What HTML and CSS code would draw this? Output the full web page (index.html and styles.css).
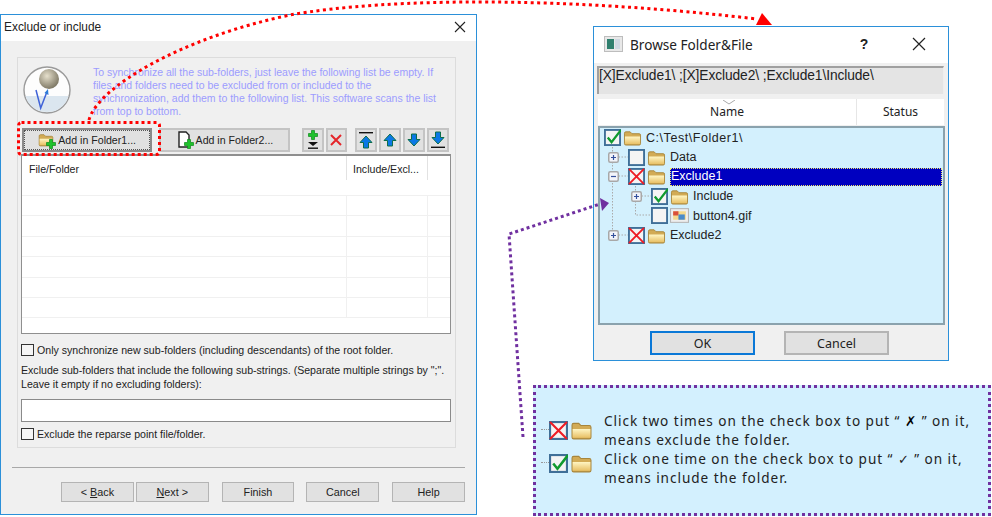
FILE: index.html
```html
<!DOCTYPE html>
<html lang="en">
<head>
<meta charset="utf-8">
<title>Exclude or include</title>
<link rel="stylesheet" href="styles.css">
</head>
<body>
<svg class="defs" width="0" height="0" aria-hidden="true">
  <defs>
    <linearGradient id="fg" x1="0" y1="0" x2="0" y2="1"><stop offset="0" stop-color="#fff6c4"/><stop offset="1" stop-color="#e8c065"/></linearGradient>
    <symbol id="folder" viewBox="0 0 20 18">
      <path d="M1.5 15.5V4.5Q1.5 3 3 3H7.5L9.5 5H17Q18.5 5 18.5 6.5V15.5Q18.5 17 17 17H3Q1.5 17 1.5 15.5Z" fill="#d2ab55" stroke="#a8863c"/>
      <path d="M2 8H18V15.5Q18 16 17 16H3Q2 16 2 15.5Z" fill="url(#fg)"/>
    </symbol>
    <symbol id="box" viewBox="0 0 18 18">
      <rect x="1" y="1" width="16" height="16" fill="#f4f4f4" stroke="#3f6f98" stroke-width="2"/>
    </symbol>
    <symbol id="box-x" viewBox="0 0 18 18">
      <rect x="1" y="1" width="16" height="16" fill="#f4f4f4" stroke="#3f6f98" stroke-width="2"/>
      <path d="M1 1L17 17M17 1L1 17" stroke="#ee1c25" stroke-width="2"/>
    </symbol>
    <symbol id="box-c" viewBox="0 0 18 18">
      <rect x="1" y="1" width="16" height="16" fill="#f4f4f4" stroke="#3f6f98" stroke-width="2"/>
      <path d="M4 9L8 14L18 1" fill="none" stroke="#0f9a2e" stroke-width="2.4"/>
    </symbol>
    <symbol id="plus" viewBox="0 0 11 11">
      <rect x=".75" y=".75" width="9.5" height="9.5" rx="1.5" fill="#f2f4fa" stroke="#a8a8a8" stroke-width="1.5"/>
      <path d="M3 5.5H8M5.5 3V8" stroke="#34509c" stroke-width="1.2"/>
    </symbol>
    <symbol id="minus" viewBox="0 0 11 11">
      <rect x=".75" y=".75" width="9.5" height="9.5" rx="1.5" fill="#f2f4fa" stroke="#a8a8a8" stroke-width="1.5"/>
      <path d="M3 5.5H8" stroke="#34509c" stroke-width="1.2"/>
    </symbol>
    <symbol id="up" viewBox="0 0 14 14">
      <path d="M7 1L13 7.5H9.5V13H4.5V7.5H1Z" fill="#0a78e6" stroke="#0d6e4a"/>
    </symbol>
    <symbol id="plus-green" viewBox="0 0 10 10">
      <path d="M3.5 .5H6.5V3.5H9.5V6.5H6.5V9.5H3.5V6.5H.5V3.5H3.5Z" fill="#1fc22c" stroke="#0c8a1a" stroke-width=".7"/>
    </symbol>
  </defs>
</svg>

<section class="window main-window">
  <header class="titlebar">
    <span class="title">Exclude or include</span>
    <svg class="close" width="12" height="12" viewBox="0 0 12 12"><path d="M1 1L11 11M11 1L1 11" stroke="#222" stroke-width="1.1"/></svg>
  </header>
  <div class="main-body">
    <div class="group">
      <div class="intro">
        <svg class="logo" width="48" height="48" viewBox="0 0 48 48">
          <defs><radialGradient id="ball" cx=".4" cy=".35" r=".7"><stop offset="0" stop-color="#e6e0cc"/><stop offset="1" stop-color="#77715e"/></radialGradient></defs>
          <circle cx="24" cy="24" r="23" fill="#fdfdfd" stroke="#9a9a9a" stroke-width="1.4"/>
          <path d="M2.5 30H45.500L43 36Q36 46 24 46Q12 46 5 36Z" fill="#dbe6ef"/>
          <circle cx="26" cy="13" r="10" fill="url(#ball)"/>
          <path d="M13 24L17.700 42L23.500 27" fill="none" stroke="#3f63d8" stroke-width="1.5"/>
          <path d="M25 23L25.500 29L21.500 27Z" fill="#2d7bd8"/>
        </svg>
        <p class="intro-text">To synchronize all the sub-folders, just leave the following list be empty. If<br>files and folders need to be excluded from or included to the<br>synchronization, add them to the following list. This software scans the list<br>from top to bottom.</p>
      </div>
      <div class="toolbar">
        <button class="btn btn-add btn-focus"><svg width="18" height="18" viewBox="0 0 18 18"><use href="#folder" width="16" height="15" x="0" y="1"/><use href="#plus-green" x="8" y="8" width="10" height="10"/></svg><span>Add in Folder1...</span></button>
        <button class="btn btn-add"><svg width="18" height="18" viewBox="0 0 18 18"><path d="M3 1H10L13 4V16H3Z" fill="#fff" stroke="#222" stroke-width="1.4"/><use href="#plus-green" x="8" y="8" width="10" height="10"/></svg><span>Add in Folder2...</span></button>
        <button class="btn btn-icon btn-first" aria-label="Add child"><svg width="16" height="20" viewBox="0 0 16 20"><use href="#plus-green" x="3" y="0" width="10" height="10"/><path d="M3 12H13L8 16Z" fill="#111"/><rect x="3" y="17.500" width="10" height="1.4" fill="#111"/></svg></button>
        <button class="btn btn-icon" aria-label="Delete"><svg width="14" height="14" viewBox="0 0 14 14"><path d="M2 2L12 12M12 2L2 12" stroke="#e5252a" stroke-width="2"/></svg></button>
        <button class="btn btn-icon btn-group-start" aria-label="Move to top"><svg width="16" height="18" viewBox="0 0 16 18"><rect x="1" y="1" width="14" height="1.4" fill="#111"/><use href="#up" x="1" y="4" width="14" height="14"/></svg></button>
        <button class="btn btn-icon" aria-label="Move up"><svg width="14" height="14" viewBox="0 0 14 14"><use href="#up"/></svg></button>
        <button class="btn btn-icon" aria-label="Move down"><svg class="flip" width="14" height="14" viewBox="0 0 14 14"><use href="#up"/></svg></button>
        <button class="btn btn-icon" aria-label="Move to bottom"><svg class="flip" width="16" height="18" viewBox="0 0 16 18"><rect x="1" y="1" width="14" height="1.4" fill="#111"/><use href="#up" x="1" y="4" width="14" height="14"/></svg></button>
      </div>
      <div class="list">
        <div class="list-row list-head"><span class="cell cell-name">File/Folder</span><span class="cell cell-state">Include/Excl...</span><span class="cell cell-end"></span></div>
        <div class="list-row"><span class="cell cell-name"></span><span class="cell cell-state"></span><span class="cell cell-end"></span></div>
        <div class="list-row"><span class="cell cell-name"></span><span class="cell cell-state"></span><span class="cell cell-end"></span></div>
        <div class="list-row"><span class="cell cell-name"></span><span class="cell cell-state"></span><span class="cell cell-end"></span></div>
        <div class="list-row"><span class="cell cell-name"></span><span class="cell cell-state"></span><span class="cell cell-end"></span></div>
        <div class="list-row"><span class="cell cell-name"></span><span class="cell cell-state"></span><span class="cell cell-end"></span></div>
        <div class="list-row"><span class="cell cell-name"></span><span class="cell cell-state"></span><span class="cell cell-end"></span></div>
      </div>
      <label class="check check-first"><span class="checkbox"></span>Only synchronize new sub-folders (including descendants) of the root folder.</label>
      <p class="desc">Exclude sub-folders that include the following sub-strings. (Separate multiple strings by ";".<br>Leave it empty if no excluding folders):</p>
      <div class="textbox"></div>
      <label class="check check-last"><span class="checkbox"></span>Exclude the reparse point file/folder.</label>
    </div>
    <div class="rule"></div>
    <div class="wizard-buttons">
      <button class="btn btn-wiz"><span>&lt; <u>B</u>ack</span></button>
      <button class="btn btn-wiz btn-next"><span><u>N</u>ext &gt;</span></button>
      <button class="btn btn-wiz btn-finish">Finish</button>
      <button class="btn btn-wiz btn-cancel">Cancel</button>
      <button class="btn btn-wiz btn-help">Help</button>
    </div>
  </div>
</section>

<section class="window browse-window">
  <header class="browse-title">
    <svg class="app-icon" width="19" height="16" viewBox="0 0 19 16"><rect x=".5" y=".5" width="18" height="15" fill="#e8e8e8" stroke="#bdbdbd"/><rect x="3" y="3" width="7" height="10" fill="#2f7f6e"/><rect x="11" y="3" width="5" height="10" fill="#cfd8e2"/></svg>
    <span class="browse-name">Browse Folder&amp;File</span>
    <span class="help-mark">?</span>
    <svg class="close-b" width="14" height="14" viewBox="0 0 14 14"><path d="M1 1L13 13M13 1L1 13" stroke="#222" stroke-width="1.2"/></svg>
  </header>
  <div class="path-box">[X]Exclude1\ ;[X]Exclude2\ ;Exclude1\Include\</div>
  <div class="tree-head">
    <span class="th-name">Name</span>
    <span class="th-status">Status</span>
    <svg class="sort" width="14" height="5" viewBox="0 0 14 5"><path d="M1 0L7 4L13 0" fill="none" stroke="#a8a8a8"/></svg>
  </div>
  <div class="tree">
    <svg class="tree-lines" width="100" height="130" viewBox="0 0 100 130"><path d="M12.500 16V108M12.500 29H28M12.500 48H28M12.500 107H28M35.500 58V87H52M35.500 68H52" fill="none" stroke="#aaa" stroke-dasharray="1.5 1.5"/></svg>
    <div class="node lvl0"><svg class="cb"><use href="#box-c"/></svg><svg class="fd"><use href="#folder"/></svg><span class="label root-label">C:\Test\Folder1\</span></div>
    <div class="node lvl1"><svg class="exp"><use href="#plus"/></svg><svg class="cb"><use href="#box"/></svg><svg class="fd"><use href="#folder"/></svg><span class="label">Data</span></div>
    <div class="node lvl1"><svg class="exp"><use href="#minus"/></svg><svg class="cb"><use href="#box-x"/></svg><svg class="fd"><use href="#folder"/></svg><span class="label selected">Exclude1</span></div>
    <div class="node lvl2"><svg class="exp"><use href="#plus"/></svg><svg class="cb"><use href="#box-c"/></svg><svg class="fd"><use href="#folder"/></svg><span class="label">Include</span></div>
    <div class="node lvl2 leaf"><svg class="cb"><use href="#box"/></svg><svg class="fd" viewBox="0 0 18 14"><rect x=".5" y=".5" width="17" height="13" fill="#eee" stroke="#b5b5b5"/><rect x="3" y="3" width="12" height="8" fill="#f4d98c"/><rect x="3" y="3" width="5" height="4" fill="#d94f3a"/><rect x="8" y="6" width="6" height="5" fill="#4a8bc9"/></svg><span class="label">button4.gif</span></div>
    <div class="node lvl1"><svg class="exp"><use href="#plus"/></svg><svg class="cb"><use href="#box-x"/></svg><svg class="fd"><use href="#folder"/></svg><span class="label">Exclude2</span></div>
  </div>
  <div class="browse-buttons">
    <button class="btn btn-dlg btn-default">OK</button>
    <button class="btn btn-dlg">Cancel</button>
  </div>
</section>

<aside class="callout">
  <div class="legend">
    <div class="legend-icons icons-x"><span class="dots"></span><svg class="lg-cb"><use href="#box-x"/></svg><svg class="lg-fd"><use href="#folder"/></svg></div>
    <p>Click two times on the check box to put “ <b class="mark">✗</b> ” on it,<br>means exclude the folder.</p>
  </div>
  <div class="legend">
    <div class="legend-icons icons-c"><span class="dots"></span><svg class="lg-cb"><use href="#box-c"/></svg><svg class="lg-fd"><use href="#folder"/></svg></div>
    <p>Click one time on the check box to put “ <span class="mark-c">✓</span> ” on it,<br>means include the folder.</p>
  </div>
</aside>

<svg class="overlay" width="992" height="517" viewBox="0 0 992 517">
  <rect x="18.5" y="122.5" width="141" height="32" rx="3" fill="none" stroke="#ff0000" stroke-width="3" stroke-dasharray="3 3"/>
  <path d="M89 120C97 88 180 38 290 15C390 -3 570 -3 757 19" fill="none" stroke="#ff0000" stroke-width="3" stroke-dasharray="3 3.5"/>
  <path d="M762 13L772 25H756Z" fill="#ff0000"/>
  <path d="M523 437L509 234L600 204" fill="none" stroke="#7030a0" stroke-width="3" stroke-dasharray="3 3"/>
  <path d="M600 198L609 203L602 211Z" fill="#7030a0"/>
</svg>
</body>
</html>
```
FILE: styles.css
```css
* { box-sizing: border-box; }
html, body { margin: 0; padding: 0; }
body {
  position: relative;
  width: 992px;
  height: 517px;
  overflow: hidden;
  background: #fff;
  font-family: "Liberation Sans", Arial, sans-serif;
  font-size: 10.6px;
  color: #222;
}
p { margin: 0; }
.defs { position: absolute; }
.overlay { position: absolute; left: 0; top: 0; pointer-events: none; }

.window { position: absolute; background: #f0f0f0; border: 1px solid #2b90d9; }
.main-window { left: 0; top: 14px; width: 477px; height: 501px; display: flex; flex-direction: column; }
.titlebar { height: 26px; flex: none; background: #fff; display: flex; align-items: center; justify-content: space-between; padding: 0 10px 2px 3px; }
.title { font-size: 11.9px; color: #222; }
.main-body { flex: 1; padding: 16px 11px 0 11px; display: flex; flex-direction: column; }

.group { width: 439px; height: 391px; margin-left: 5px; border: 1px solid #dcdcdc; padding: 0 4px 0 3px; display: flex; flex-direction: column; }
.intro { height: 70px; flex: none; display: flex; padding: 8px 0 0 2px; }
.logo { flex: none; }
.intro-text { width: 348px; margin: 0 0 0 22px; color: #9c9cff; line-height: 13px; font-size: 10.5px; white-space: nowrap; }

.btn { font: inherit; color: #222; background: #e1e1e1; border: 1px solid #adadad; padding: 0; display: inline-flex; align-items: center; justify-content: center; }
.toolbar { height: 24px; flex: none; display: flex; padding-left: 1px; }
.btn-add { width: 131px; height: 24px; margin-right: 7px; gap: 2px; border-width: 2px; border-color: #c4c4c4; }
.btn-focus { border-color: #8a8a8a; outline: 1px dotted #555; outline-offset: -3px; }
.btn-icon { width: 22px; height: 24px; margin-right: 2px; border-width: 2px; border-color: #c4c4c4; }
.btn-first { margin-left: 5px; }
.btn-group-start { margin-left: 6px; }
.flip { transform: scaleY(-1); }

.list { height: 180px; flex: none; margin-top: 2px; background: #fff; border: 1px solid #8f8f8f; border-top-width: 2px; overflow: hidden; }
.list-row { display: flex; height: 20.4px; border-bottom: 1px solid #f0f0f0; }
.list-head { height: 40px; }
.cell { display: block; height: 100%; border-right: 1px solid #f0f0f0; }
.cell-name { width: 325px; padding: 7px 0 0 7px; }
.cell-state { width: 81px; padding: 7px 0 0 6px; white-space: nowrap; }
.cell-end { width: 22px; border-right: 0; }
.list-head .cell { height: 24px; border-right-color: #e2e2e2; }

.check { display: flex; align-items: center; gap: 3px; white-space: nowrap; }
.check-first { margin-top: 9px; height: 14px; }
.check-last { margin-top: 5px; height: 14px; }
.checkbox { width: 13px; height: 12px; flex: none; border: 1px solid #333; background: #f5f5f5; }
.desc { margin-top: 7px; line-height: 13.5px; white-space: nowrap; height: 27px; }
.textbox { height: 23px; flex: none; margin-top: 8px; background: #fff; border: 1px solid #8a8a8a; }

.rule { height: 1px; flex: none; width: 453px; margin-top: 19px; background: #a8a8a8; }
.wizard-buttons { display: flex; margin-top: 14px; padding-left: 49px; }
.btn-wiz { width: 73px; height: 20px; border-width: 1px; border-color: #b4b4b4; font-size: 10.8px; }
.btn-next { margin-left: 2px; }
.btn-finish { margin-left: 13px; }
.btn-cancel { margin-left: 12px; }
.btn-help { margin-left: 13px; }

.browse-window { left: 593px; top: 26px; width: 356px; height: 335px; display: flex; flex-direction: column; }
.browse-title { height: 36px; flex: none; background: #fff; display: flex; align-items: center; padding: 0 0 2px 10px; font-size: 14px; }
.browse-name { margin-left: 7px; font-family: "Noto Sans", sans-serif; font-size: 13.6px; color: #222; }
.help-mark { margin-left: 107px; font-size: 14px; font-weight: bold; color: #222; }
.close-b { margin-left: 44px; }
.path-box { margin: 3px 4px 0 3px; height: 28px; flex: none; background: #e4e4e4; border-top: 2px solid #a0a0a0; border-left: 2px solid #a0a0a0; border-right: 1px solid #eee; font-size: 13.8px; padding: 0; white-space: nowrap; color: #222; letter-spacing: -.1px; }
.tree-head { margin: 5px 4px 0 4px; height: 26px; flex: none; background: #fff; display: flex; position: relative; font-family: "Noto Sans", sans-serif; font-size: 12px; }
.th-name { width: 259px; border-right: 1px solid #e6e6e6; text-align: center; padding-top: 4px; }
.th-status { flex: 1; text-align: center; padding-top: 4px; }
.sort { position: absolute; left: 124px; top: 1px; }

.tree { position: relative; margin: 1px 3px 0 4px; height: 199px; flex: none; background: #d3f0fd; border: 2px solid #8aa2ad; font-size: 12.5px; color: #222; }
.tree-lines { position: absolute; left: 0; top: 0; }
.node { position: relative; display: flex; align-items: center; height: 19.5px; }
.lvl0 { padding-left: 4px; }
.lvl1 { padding-left: 8px; }
.lvl2 { padding-left: 31px; }
.leaf { padding-left: 51px; }
.exp { width: 11px; height: 11px; flex: none; margin-right: 9px; }
.cb { width: 17px; height: 17px; flex: none; }
.fd { width: 19px; height: 17px; flex: none; margin-left: 2px; }
.label { margin-left: 4px; white-space: nowrap; }
.root-label { letter-spacing: .55px; }
.selected { flex: 1; margin-right: 1px; background: #0000c0; color: #fff; border: 1px dotted #f2e866; height: 18px; line-height: 15px; }

.browse-buttons { display: flex; justify-content: flex-start; padding: 6px 0 0 56px; gap: 29px; }
.btn-dlg { width: 105px; height: 24px; border: 2px solid #b4b4b4; font-family: "Noto Sans", sans-serif; font-size: 12.5px; }
.btn-default { border-color: #0a78d7; }

.callout { position: absolute; left: 533px; top: 385px; width: 458px; height: 131px; background: #d3f0fe; border: 3px dotted #7030a0; padding: 23px 0 0 0; font-family: "Noto Sans", sans-serif; font-size: 13.6px; line-height: 19px; letter-spacing: .95px; color: #222; }
.legend { display: flex; height: 38px; }
.legend-icons { width: 68px; flex: none; display: flex; align-items: flex-start; padding-left: 5px; letter-spacing: 0; }
.icons-x { padding-top: 9px; }
.icons-c { padding-top: 4px; }
.dots { width: 8px; height: 1px; margin-top: 9px; border-top: 1px dotted #999; flex: none; }
.lg-cb { width: 19px; height: 19px; flex: none; margin-top: 1px; }
.lg-fd { width: 23px; height: 20px; flex: none; margin-left: 2px; }
.mark { color: #000; font-family: "DejaVu Sans", sans-serif; font-style: italic; line-height: 1; }
.mark-c { font-family: "DejaVu Sans", sans-serif; font-size: 13px; line-height: 1; }
```
